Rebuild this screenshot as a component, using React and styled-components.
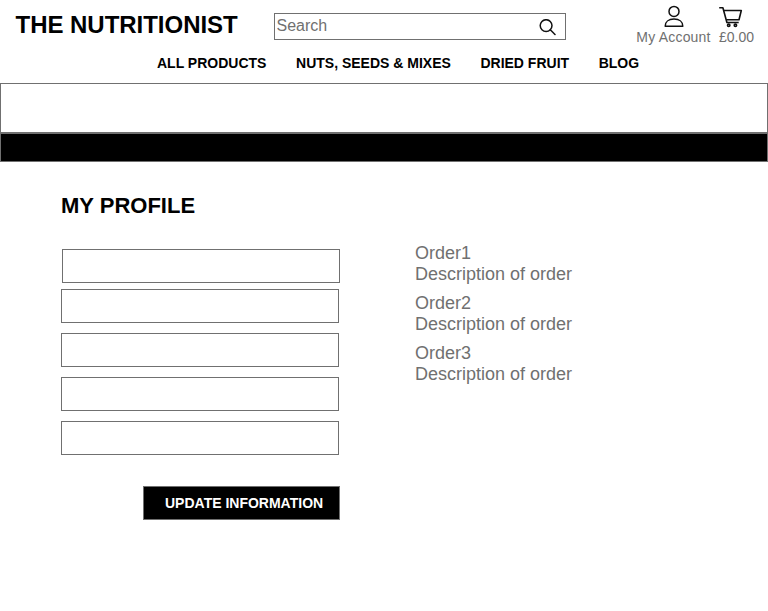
import React from "react";
import styled, { createGlobalStyle } from "styled-components";

const GlobalStyle = createGlobalStyle`
  *, *::before, *::after { box-sizing: border-box; }
  body {
    margin: 0;
    background: #fff;
    color: #000;
    font-family: "Liberation Sans", Arial, Helvetica, sans-serif;
  }
  h1, h2, p, ul { margin: 0; padding: 0; }
`;

const Page = styled.div`
  width: 768px;
  height: 611px;
  overflow: hidden;
`;

const Header = styled.header`
  height: 83px;
`;

const TopRow = styled.div`
  display: flex;
  height: 52px;
`;

const Brand = styled.h1`
  width: 274px;
  padding: 11px 0 0 15.5px;
  font-size: 24px;
  line-height: 28px;
  letter-spacing: -0.03px;
  white-space: nowrap;
`;

const SearchBox = styled.label`
  display: flex;
  justify-content: space-between;
  width: 292px;
  height: 27px;
  margin-top: 13px;
  padding: 0 9.5px 0 1.5px;
  border: 1px solid #707070;
`;

const SearchInput = styled.input`
  width: 200px;
  height: 24px;
  padding: 0;
  border: 0;
  outline: 0;
  font: 16px "Liberation Sans", Arial, sans-serif;
  color: #707070;
  &::placeholder { color: #707070; opacity: 1; }
`;

const SearchIcon = styled.svg`
  width: 17px;
  height: 17px;
  margin-top: 5px;
`;

const Actions = styled.div`
  display: flex;
  gap: 8px;
  margin-left: 70px;
  padding-top: 5px;
`;

const Action = styled.a`
  display: flex;
  flex-direction: column;
  align-items: ${(p) => p.$align};
  width: ${(p) => p.$width}px;
  color: #707070;
  font-size: 14px;
  line-height: 16px;
  letter-spacing: ${(p) => p.$spacing || 0}px;
  white-space: nowrap;
`;

const ActionIcon = styled.svg`
  width: 24px;
  height: 24px;
  flex: none;
`;

const Nav = styled.nav`
  display: flex;
  gap: 29.6px;
  padding: 3px 0 0 157px;
`;

const NavLink = styled.a`
  font-size: 14px;
  font-weight: 700;
  line-height: 16px;
  white-space: nowrap;
`;

const Band = styled.div`
  height: ${(p) => p.$height}px;
  border: 1px solid #707070;
  background: ${(p) => p.$fill};
`;

const Main = styled.main`
  padding: 31px 0 0 61px;
`;

const Title = styled.h2`
  font-size: 22px;
  line-height: 25px;
`;

const Columns = styled.div`
  display: grid;
  grid-template-columns: 279px 1fr;
  column-gap: 75px;
  margin-top: 31px;
`;

const Form = styled.form`
  display: flex;
  flex-direction: column;
`;

const Field = styled.input`
  width: 278px;
  height: 34px;
  margin: 0 0 ${(p) => p.$gap}px ${(p) => p.$indent || 0}px;
  padding: 0 8px;
  border: 1px solid #707070;
  background: #fff;
  outline: 0;
`;

const SubmitButton = styled.button`
  align-self: flex-end;
  width: 197px;
  height: 34px;
  padding: 0 0 0 21px;
  border: 1px solid #707070;
  background: #000;
  color: #fff;
  font: 700 14px/16px "Liberation Sans", Arial, sans-serif;
  text-align: left;
  white-space: nowrap;
`;

const Orders = styled.ul`
  display: flex;
  flex-direction: column;
  gap: 8px;
  margin-top: -6px;
  list-style: none;
`;

const Order = styled.li`
  color: #707070;
  font-size: 18px;
  line-height: 21px;
`;

const links = ["ALL PRODUCTS", "NUTS, SEEDS & MIXES", "DRIED FRUIT", "BLOG"];
const orders = ["Order1", "Order2", "Order3"];
const fields = [
  { name: "Name", gap: 6, indent: 1 },
  { name: "Email", gap: 10 },
  { name: "Phone", gap: 10 },
  { name: "Address", gap: 10 },
  { name: "Postcode", gap: 31 },
];

export default function App() {
  return (
    <Page>
      <GlobalStyle />
      <Header>
        <TopRow>
          <Brand>THE NUTRITIONIST</Brand>
          <SearchBox>
            <SearchInput placeholder="Search" />
            <SearchIcon viewBox="0 0 17 17" fill="none" stroke="#111" strokeWidth="1.5" strokeLinecap="round">
              <circle cx="7.1" cy="6.6" r="5.9" />
              <path d="M11.3 10.8 16 15.5" />
            </SearchIcon>
          </SearchBox>
          <Actions>
            <Action $align="center" $width={75} $spacing={0.2}>
              <ActionIcon viewBox="0 0 24 24" fill="none" stroke="#111" strokeWidth="1.5" strokeLinejoin="round">
                <circle cx="12" cy="6.4" r="5" />
                <path d="M3.2 21.2c0-4.3 3.4-7.1 8.8-7.1s8.8 2.8 8.8 7.1Z" />
              </ActionIcon>
              My Account
            </Action>
            <Action $align="flex-start" $width={35}>
              <ActionIcon viewBox="0 0 24 24" fill="none" stroke="#111" strokeWidth="1.6" strokeLinejoin="round">
                <path d="M0.2 2.8h3.7l4 14.7h11.8" />
                <path d="M4.9 5.5h17.4l-2.3 9.3H7.2" />
                <circle cx="9.7" cy="20.3" r="1.2" />
                <circle cx="16.4" cy="20.3" r="1.2" />
              </ActionIcon>
              £0.00
            </Action>
          </Actions>
        </TopRow>
        <Nav>
          {links.map((link) => (
            <NavLink key={link}>{link}</NavLink>
          ))}
        </Nav>
      </Header>
      <Band $height={50} $fill="#fff" />
      <Band $height={29} $fill="#000" />
      <Main>
        <Title>MY PROFILE</Title>
        <Columns>
          <Form>
            {fields.map((f) => (
              <Field key={f.name} aria-label={f.name} $gap={f.gap} $indent={f.indent} />
            ))}
            <SubmitButton type="button">UPDATE INFORMATION</SubmitButton>
          </Form>
          <Orders>
            {orders.map((order) => (
              <Order key={order}>
                <p>{order}</p>
                <p>Description of order</p>
              </Order>
            ))}
          </Orders>
        </Columns>
      </Main>
    </Page>
  );
}
